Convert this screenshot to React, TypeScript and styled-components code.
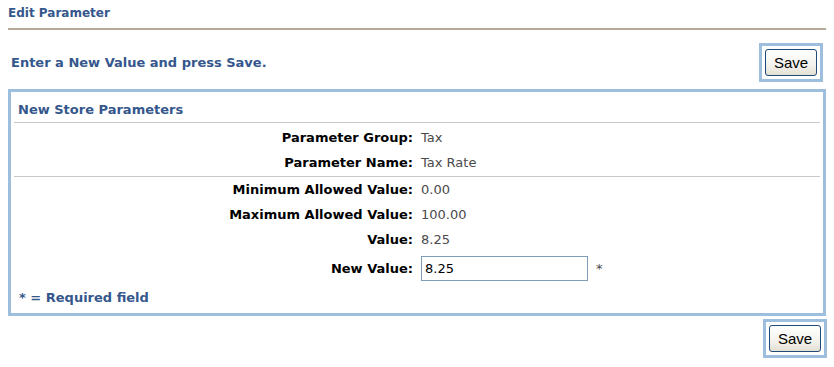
import React, { FC } from "react";
import styled, { createGlobalStyle } from "styled-components";

const colors = {
  title: "#35578c",
  frame: "#9dbedd",
  rule: "#c8c8c8",
  label: "#000000",
  value: "#4a4a4a",
  headerRule: "#b3ab98",
};

const GlobalStyle = createGlobalStyle`
  html, body {
    margin: 0;
    padding: 0;
    background: #ffffff;
  }

  body {
    font-family: "DejaVu Sans", Verdana, sans-serif;
  }
`;

const Page = styled.div`
  width: 834px;
  box-sizing: border-box;
  padding: 0 8px;
`;

const PageTitle = styled.h1`
  margin: 0;
  padding-top: 5px;
  height: 30px;
  box-sizing: border-box;
  font-size: 12px;
  font-weight: bold;
  color: ${colors.title};
  border-bottom: 2px solid ${colors.headerRule};
  line-height: 16px;
`;

const Toolbar = styled.div`
  display: flex;
  align-items: center;
  justify-content: space-between;
  margin-top: 13px;
  padding: 0 3px;
`;

const Instruction = styled.p`
  margin: 0;
  font-size: 13px;
  font-weight: bold;
  color: ${colors.title};
`;

const SaveFrame = styled.div`
  display: flex;
  padding: 3px;
  border: 3px solid ${colors.frame};
`;

const SaveButton = styled.button`
  width: 52px;
  height: 27px;
  padding: 0;
  font-family: "Liberation Sans", Arial, sans-serif;
  font-size: 15px;
  color: #000;
  background: linear-gradient(#ffffff, #f3f2ec 60%, #e3e0d3);
  border: 1px solid #1f4a7a;
  border-radius: 3px;
  cursor: pointer;
`;

const Panel = styled.section`
  margin-top: 7px;
  border: 3px solid ${colors.frame};
  padding: 0 3px;
`;

const PanelTitle = styled.h2`
  margin: 0;
  padding: 10px 4px 4px;
  font-size: 13px;
  font-weight: bold;
  color: ${colors.title};
  line-height: 16px;
  border-bottom: 1px solid ${colors.rule};
`;

const FieldGroup = styled.div<{ $divided?: boolean }>`
  display: grid;
  grid-template-columns: 1fr 1fr;
  column-gap: 8px;
  padding-top: ${(p) => (p.$divided ? "2px" : "0")};
  padding-bottom: ${(p) => (p.$divided ? "1px" : "0")};
  border-bottom: ${(p) => (p.$divided ? `1px solid ${colors.rule}` : "none")};
`;

const Label = styled.div<{ $tall?: boolean }>`
  display: flex;
  align-items: center;
  justify-content: flex-end;
  height: ${(p) => (p.$tall ? "32px" : "25px")};
  font-size: 13px;
  font-weight: bold;
  color: ${colors.label};
`;

const Value = styled.div<{ $tall?: boolean }>`
  display: flex;
  align-items: center;
  gap: 8px;
  height: ${(p) => (p.$tall ? "32px" : "25px")};
  font-size: 13px;
  color: ${colors.value};
`;

const TextInput = styled.input`
  width: 167px;
  height: 25px;
  box-sizing: border-box;
  padding: 0 3px;
  font-family: "DejaVu Sans", Verdana, sans-serif;
  font-size: 13px;
  color: #000;
  border: 1px solid #7f9db9;
  outline: none;
`;

const Required = styled.span`
  color: ${colors.value};
  font-size: 13px;
`;

const Footnote = styled.p`
  margin: 0;
  padding: 6px 5px 7px;
  font-size: 13px;
  font-weight: bold;
  color: ${colors.title};
  line-height: 16px;
`;

const BottomBar = styled.div`
  display: flex;
  justify-content: flex-end;
  margin-top: 3px;
  margin-right: -1px;
`;

interface Field {
  label: string;
  value: string;
}

const identity: Field[] = [
  { label: "Parameter Group:", value: "Tax" },
  { label: "Parameter Name:", value: "Tax Rate" },
];

const limits: Field[] = [
  { label: "Minimum Allowed Value:", value: "0.00" },
  { label: "Maximum Allowed Value:", value: "100.00" },
  { label: "Value:", value: "8.25" },
];

const App: FC = () => {
  return (
    <>
      <GlobalStyle />
      <Page>
        <PageTitle>Edit Parameter</PageTitle>

        <Toolbar>
          <Instruction>Enter a New Value and press Save.</Instruction>
          <SaveFrame>
            <SaveButton type="button">Save</SaveButton>
          </SaveFrame>
        </Toolbar>

        <Panel>
          <PanelTitle>New Store Parameters</PanelTitle>

          <FieldGroup $divided>
            {identity.map(({ label, value }) => (
              <React.Fragment key={label}>
                <Label>{label}</Label>
                <Value>{value}</Value>
              </React.Fragment>
            ))}
          </FieldGroup>

          <FieldGroup>
            {limits.map(({ label, value }) => (
              <React.Fragment key={label}>
                <Label>{label}</Label>
                <Value>{value}</Value>
              </React.Fragment>
            ))}
            <Label $tall>New Value:</Label>
            <Value $tall>
              <TextInput type="text" defaultValue="8.25" />
              <Required>*</Required>
            </Value>
          </FieldGroup>

          <Footnote>* = Required field</Footnote>
        </Panel>

        <BottomBar>
          <SaveFrame>
            <SaveButton type="button">Save</SaveButton>
          </SaveFrame>
        </BottomBar>
      </Page>
    </>
  );
};

export default App;
